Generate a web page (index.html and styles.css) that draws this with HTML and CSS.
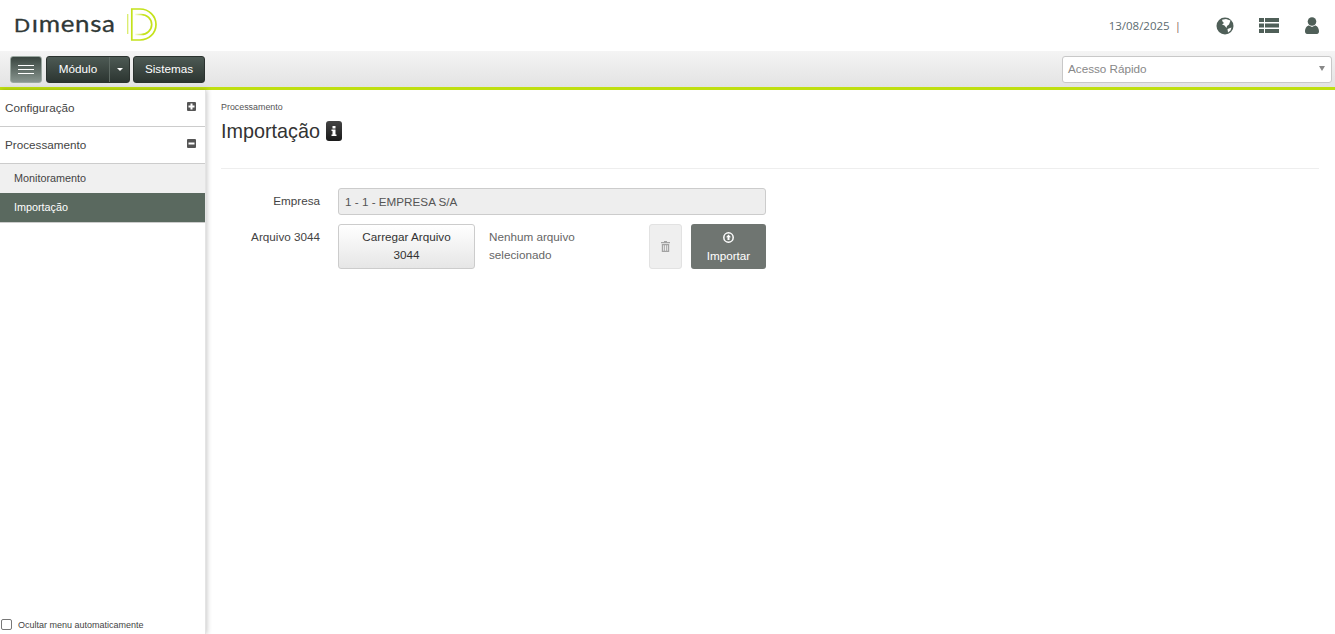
FILE: index.html
```html
<!DOCTYPE html>
<html lang="pt-BR">
<head>
<meta charset="utf-8">
<title>Importação</title>
<link rel="stylesheet" href="styles.css">
</head>
<body>
<header class="top">
  <div class="logo">
    <span class="logo-text"><span class="logo-d">D</span>ımensa</span>
    <svg class="logo-mark" width="30" height="33" viewBox="0 0 30 33" fill="none" stroke="#c4e21b">
      <defs>
        <linearGradient id="fade" x1="0" x2="1" y1="0" y2="0">
          <stop offset="0" stop-color="#c4e21b" stop-opacity="0.1"/>
          <stop offset="0.5" stop-color="#c4e21b"/>
        </linearGradient>
      </defs>
      <path d="M.7 6V26" stroke-width="1.300" stroke-opacity=".65"/>
      <path d="M4.800 1V32H13C22 32 29 25 29 16.500S22 1 13 1Z" stroke-width="1.700"/>
      <path d="M8 6.500H14C20 6.500 24.700 11 24.700 16.500S20 26.500 14 26.500H8" stroke="url(#fade)" stroke-width="1.700"/>
    </svg>
  </div>
  <div class="top-right">
    <span class="date">13/08/2025</span>
    <span class="sep">|</span>
    <svg class="ic-globe" width="18" height="18" viewBox="0 0 18 18"><circle cx="9" cy="9" r="8.500" fill="#4f5f58"/><path d="M6 2.800 10 2 14.500 3.500 13 7.500 11 9 10.500 11 8.500 8.500 6 7.500 8 6 6.500 4.500ZM11.500 12 15.500 10.500 14.500 13.500 12 15.500Z" fill="#fff"/></svg>
    <svg class="ic-list" width="20" height="15" viewBox="0 0 20 15" fill="#4f5f58"><path d="M0 0H5V4H0ZM6 0H20V4H6ZM0 5.500H5V9.500H0ZM6 5.500H20V9.500H6ZM0 11H5V15H0ZM6 11H20V15H6Z"/></svg>
    <svg class="ic-user" width="14" height="17" viewBox="0 0 14 17" fill="#4f5f58"><circle cx="7" cy="4.500" r="4.300"/><path d="M0 14.500C0 10.500 2.500 8.500 4 8.500L7 10 10 8.500C11.500 8.500 14 10.500 14 14.500 14 16 13 17 12 17H2C1 17 0 16 0 14.500Z"/></svg>
  </div>
</header>
<nav class="bar">
  <button class="btn-menu" type="button" aria-label="Menu"><span></span><span></span><span></span></button>
  <div class="btn-dark btn-group"><span class="btn-main">Módulo</span><span class="btn-caret"><i></i></span></div>
  <div class="btn-dark btn-sys">Sistemas</div>
  <div class="quick"><span>Acesso Rápido</span><i></i></div>
</nav>
<div class="main">
  <aside class="side">
    <div class="side-list">
      <div class="side-head"><span>Configuração</span>
        <svg width="9" height="9" viewBox="0 0 9 9"><rect width="9" height="9" rx="1" fill="#555"/><path d="M3.500 1.500H5.500V3.500H7.500V5.500H5.500V7.500H3.500V5.500H1.500V3.500H3.500Z" fill="#fff"/></svg></div>
      <div class="side-head"><span>Processamento</span>
        <svg width="9" height="9" viewBox="0 0 9 9"><rect width="9" height="9" rx="1" fill="#555"/><rect x="1.500" y="3.500" width="6" height="2" fill="#fff"/></svg></div>
      <div class="side-item">Monitoramento</div>
      <div class="side-item active">Importação</div>
    </div>
    <label class="hide-menu"><span class="check"></span>Ocultar menu automaticamente</label>
  </aside>
  <section class="content">
    <div class="crumb">Processamento</div>
    <div class="title-row">
      <h1>Importação</h1>
      <span class="info"><svg width="6" height="10" viewBox="0 0 6 10" fill="#fff"><path d="M1.500 0H4.500V2.500H1.500ZM.5 3.500H4.500V8.500H5.500V10H.5V8.500H1.500V5H.5Z"/></svg></span>
    </div>
    <div class="rule"></div>
    <div class="form-row">
      <label class="lbl lbl-company">Empresa</label>
      <div class="input">1 - 1 - EMPRESA S/A</div>
    </div>
    <div class="form-row row-file">
      <label class="lbl lbl-file">Arquivo 3044</label>
      <div class="btn-load">Carregar Arquivo<br>3044</div>
      <div class="nofile">Nenhum arquivo<br>selecionado</div>
      <div class="btn-trash"><svg width="9" height="11" viewBox="0 0 9 11" fill="#a3a3a3"><path d="M3 0H6V1H9V2.200H0V1H3ZM.8 3H8.200V11H.8ZM2.200 4.200V9.800H3.200V4.200ZM4 4.200V9.800H5V4.200ZM5.800 4.200V9.800H6.800V4.200Z" fill-rule="evenodd"/></svg></div>
      <div class="btn-import">
        <svg width="11" height="11" viewBox="0 0 11 11" fill="none"><circle cx="5.500" cy="5.500" r="4.700" stroke="#fff" stroke-width="1.500"/><path d="M5.500 2.500 8 5.300H6.500V8H4.500V5.300H3Z" fill="#fff"/></svg>
        <span>Importar</span>
      </div>
    </div>
  </section>
</div>
</body>
</html>
```
FILE: styles.css
```css
* { box-sizing: border-box; }
html, body { margin: 0; height: 100%; }
body {
  width: 1335px;
  height: 634px;
  overflow: hidden;
  display: flex;
  flex-direction: column;
  font-family: "Liberation Sans", Arial, sans-serif;
  font-size: 13px;
  color: #444;
  background: #fff;
}
.top {
  height: 51px;
  flex: none;
  display: flex;
  align-items: center;
  justify-content: space-between;
  padding: 0 16px 0 14px;
}
.logo { display: flex; align-items: center; gap: 12px; margin-top: -3px; }
.logo-text {
  width: 101px;
  font-family: "Lato", sans-serif;
  font-size: 24px;
  line-height: 26px;
  letter-spacing: .6px;
  color: #2f3836;
  white-space: nowrap;
  -webkit-text-stroke: .3px #2f3836;
  display: inline-block;
  transform: scaleX(1.080);
  transform-origin: left center;
}
.logo-d { font-size: 17px; display: inline-block; transform: scaleX(1.150); transform-origin: left; margin-right: 3px; }
.top-right { display: flex; align-items: center; font-family: "Open Sans", sans-serif; font-size: 11.500px; color: #5c6b70; }
.date { margin-right: 5px; }
.sep { color: #8a6a5a; margin-right: 35px; }
.ic-globe { margin-right: 25px; }
.ic-list { margin-right: 26px; }
.bar {
  height: 39px;
  flex: none;
  display: flex;
  align-items: center;
  padding: 0 0 0 10px;
  background: linear-gradient(#f4f4f4, #e3e3e3);
  border-bottom: 3px solid #bfdf10;
}
.btn-menu {
  width: 32px;
  height: 27px;
  padding: 0;
  display: flex;
  flex-direction: column;
  align-items: center;
  justify-content: center;
  gap: 3px;
  border: 1px solid #9aa7a0;
  border-radius: 3px;
  background: linear-gradient(#39453f, #88958f);
}
.btn-menu span { width: 16px; height: 1px; background: #fff; display: block; }
.btn-dark {
  height: 27px;
  border-radius: 3px;
  border: 1px solid #2b322f;
  background: linear-gradient(#4d5a54, #2c3531);
  color: #fff;
  font-size: 11.700px;
  line-height: 23px;
}
.btn-group { display: flex; width: 84px; margin-left: 4px; }
.btn-main { width: 62px; text-align: center; }
.btn-caret {
  flex: 1;
  border-left: 1px solid #5e6a64;
  display: flex;
  align-items: center;
  justify-content: center;
}
.btn-caret i { width: 0; height: 0; border: 3px solid transparent; border-top-color: #fff; border-bottom-width: 0; }
.btn-sys { width: 72px; margin-left: 3px; text-align: center; }
.quick {
  margin-left: auto;
  width: 270px;
  height: 27px;
  margin-right: 3px;
  padding: 0 5px 2px;
  display: flex;
  align-items: center;
  justify-content: space-between;
  background: #fff;
  border: 1px solid #c8c8c8;
  border-radius: 3px;
  font-size: 11.700px;
  color: #888;
}
.quick i { width: 0; height: 0; border: 3px solid transparent; border-top: 5px solid #888; border-bottom-width: 0; margin-right: 1px; }
.main { flex: 1; display: flex; min-height: 0; }
.side {
  width: 206px;
  flex: none;
  display: flex;
  flex-direction: column;
  justify-content: space-between;
  box-shadow: 1px 0 5px rgba(0,0,0,.22);
  border-right: 1px solid #e4e4e4;
}
.side-head {
  height: 37px;
  display: flex;
  align-items: center;
  justify-content: space-between;
  padding: 0 9px 2px 5px;
  border-bottom: 1px solid #ccc;
  font-size: 11.700px;
  color: #444;
}
.side-head svg { margin-top: -1px; }
.side-item {
  height: 29px;
  line-height: 29px;
  padding-left: 14px;
  background: #f0f0f0;
  font-size: 10.800px;
  color: #444;
}
.side-item.active { background: #5a695f; color: #fff; border-bottom: 1px solid #ccc; height: 30px; }
.hide-menu { display: flex; align-items: center; font-size: 9px; color: #444; padding: 0 0 1px 1px; height: 18px; }
.check { width: 11px; height: 11px; border: 1px solid #777; border-radius: 2px; background: #fff; margin-right: 6px; }
.content { flex: 1; padding: 12px 16px 0 15px; min-width: 0; }
.crumb { font-size: 8.900px; color: #555; line-height: 11px; }
.title-row { display: flex; align-items: center; gap: 6px; margin-top: 5px; height: 26px; }
h1 { margin: 0; font-size: 19.800px; font-weight: 400; color: #333; line-height: 26px; }
.info {
  width: 16px;
  height: 20px;
  border-radius: 3px;
  background: linear-gradient(#444, #1a1a1a);
  display: flex;
  align-items: center;
  justify-content: center;
}
.rule { height: 1px; background: #eee; margin-top: 24px; }
.form-row { display: flex; align-items: center; margin-top: 19px; }
.row-file { margin-top: 9px; align-items: stretch; height: 45px; }
.lbl { width: 99px; text-align: right; font-size: 11.700px; color: #444; }
.lbl-company { padding-bottom: 2px; }
.lbl-file { padding-top: 6px; }
.input {
  margin-left: 18px;
  width: 428px;
  height: 27px;
  line-height: 25px;
  padding-left: 6px;
  background: #eee;
  border: 1px solid #ccc;
  border-radius: 3px;
  font-size: 11.700px;
  color: #555;
}
.btn-load {
  margin-left: 18px;
  width: 137px;
  text-align: center;
  line-height: 18px;
  padding-top: 3px;
  font-size: 11.700px;
  color: #333;
  border: 1px solid #ccc;
  border-radius: 3px;
  background: linear-gradient(#fff, #e6e6e6);
}
.nofile { width: 160px; margin-left: 14px; padding-top: 4px; font-size: 11.700px; line-height: 18px; color: #666; }
.btn-trash {
  width: 33px;
  border: 1px solid #e2e2e2;
  border-radius: 3px;
  background: #efefef;
  display: flex;
  align-items: center;
  justify-content: center;
}
.btn-import {
  width: 75px;
  margin-left: 9px;
  border-radius: 3px;
  background: #6f7571;
  color: #fff;
  font-size: 11.700px;
  display: flex;
  flex-direction: column;
  align-items: center;
  justify-content: center;
  gap: 6px;
}
```
